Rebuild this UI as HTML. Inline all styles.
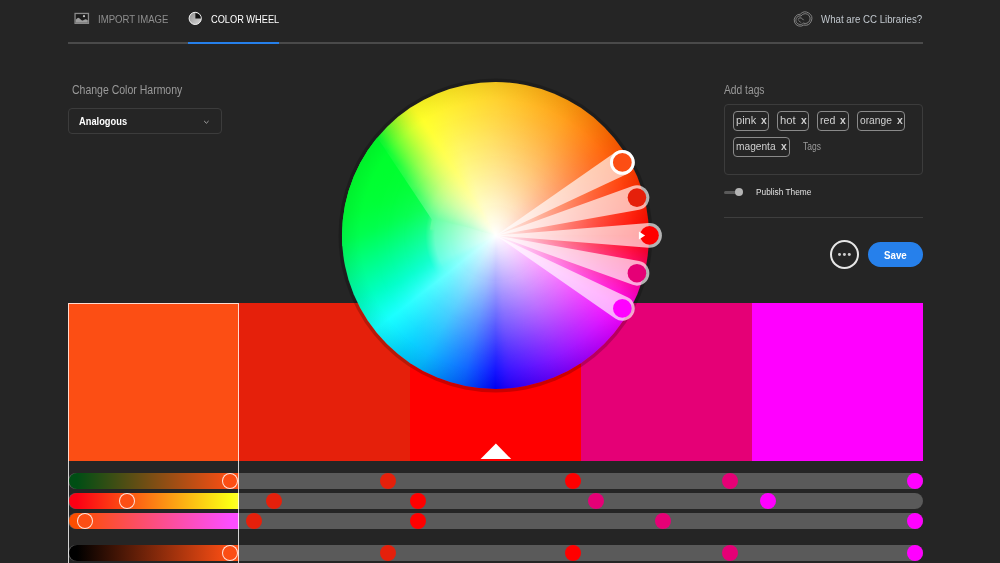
<!DOCTYPE html>
<html lang="en">
<head>
<meta charset="utf-8">
<title>Color Wheel</title>
<style>
html,body{margin:0;padding:0;}
body{width:1000px;height:563px;overflow:hidden;background:#252525;position:relative;
 font-family:"Liberation Sans",sans-serif;color:#fff;}
.abs{position:absolute;}
.t{position:absolute;white-space:nowrap;line-height:1;transform-origin:0 0;}
.line{position:absolute;}
.tag{position:absolute;box-sizing:border-box;height:20px;border:1px solid #8a8a8a;border-radius:4px;}
.tag .t{color:#d0d0d0;font-size:11.5px;top:3.5px;}
.tag .x{font-weight:bold;}
.sw{position:absolute;top:303px;height:158px;width:171px;}
.sl{position:absolute;left:68px;width:855px;height:16px;border-radius:8px;background:#5a5a5a;}
.dot{position:absolute;width:16px;height:16px;border-radius:50%;margin-left:-8px;}
.grad{position:absolute;left:69px;width:170px;height:16px;border-radius:8px 0 0 8px;}
.hd{position:absolute;width:16px;height:16px;border-radius:50%;margin-left:-8px;box-sizing:border-box;border:1px solid rgba(255,255,255,.85);}
.wl{position:absolute;border-radius:50%;}
</style>
</head>
<body>

<!-- header -->
<svg class="abs" style="left:74px;top:12px" width="16" height="13" viewBox="74 12 16 13">
 <rect x="74.4" y="12.8" width="14.7" height="11.2" fill="#8a8a8a"/>
 <rect x="75.7" y="14.1" width="12.1" height="8.7" fill="#1c1c1c"/>
 <path d="M75.7 19.8 L77.3 18.2 Q78.3 17.3 79.3 18.3 L81.6 20.3 Q82.4 20.9 83.3 20.3 L84.8 19.5 Q85.6 19.1 86.4 19.5 L87.8 20.2 V22.8 H75.7 Z" fill="#9e9e9e"/>
 <circle cx="84" cy="16.2" r="1.1" fill="#c4c4c4"/>
</svg>
<div class="t" id="t1" style="left:98.2px;top:13.5px;font-size:11.5px;color:#8e8e8e;transform:scaleX(.833)">IMPORT IMAGE</div>

<svg class="abs" style="left:188px;top:11px" width="15" height="15" viewBox="0 0 15 15">
 <defs><linearGradient id="cwg" x1="0" y1="0" x2="1" y2="1"><stop offset="0" stop-color="#8c8c8c"/><stop offset="1" stop-color="#d8d8d8"/></linearGradient></defs>
 <circle cx="7.2" cy="7.4" r="6.1" fill="url(#cwg)" stroke="#f4f4f4" stroke-width="1"/>
 <path d="M7.4 7.4 V1.9 A5.5 5.5 0 0 1 12.9 7.4 Z" fill="#111"/>
</svg>
<div class="t" id="t2" style="left:211.4px;top:13.5px;font-size:11.5px;color:#fff;transform:scaleX(.802)">COLOR WHEEL</div>

<div class="line" style="left:68px;top:42px;width:855px;height:1.7px;background:#4a4a4a"></div>
<div class="line" style="left:188px;top:41.6px;width:91.3px;height:2px;background:#2680eb"></div>

<svg class="abs" style="left:793px;top:11px" width="20" height="16" viewBox="0 0 20 16">
 <g fill="none" stroke="#8c8c8c" stroke-width="0.9">
 <path d="M7.27 3.2 A6 6 0 1 0 10.75 14.04 A6.6 6.6 0 1 0 7.27 3.2 Z"/>
 <path d="M8.06 4.99 A4.3 4.3 0 1 0 10.34 12.13 A4.9 4.9 0 1 0 8.06 4.99 Z"/>
 <path d="M5.2 8.6 C5.4 6.6 8 6.2 9.4 7.8 L10.6 9.2"/>
 <path d="M5.6 9.4 L7.8 11.6"/>
 </g>
</svg>
<div class="t" id="t3" style="left:821.3px;top:13.6px;font-size:11px;color:#c2c8ce;transform:scaleX(.88)">What are CC Libraries?</div>

<!-- left panel -->
<div class="t" id="t4" style="left:72.2px;top:83.6px;font-size:12.5px;color:#9a9a9a;transform:scaleX(.84)">Change Color Harmony</div>
<div class="abs" style="left:68px;top:108px;width:154px;height:25.5px;box-sizing:border-box;border:1px solid #3c3c3c;border-radius:4px;background:#252525"></div>
<div class="t" id="t5" style="left:78.9px;top:116.9px;font-size:10px;font-weight:bold;color:#fff;transform:scaleX(.93)">Analogous</div>
<svg class="abs" style="left:203px;top:120.3px" width="7" height="5" viewBox="0 0 7 5"><path d="M1.2 1 L3.4 3.2 L5.6 1" fill="none" stroke="#a8a8a8" stroke-width="1"/></svg>

<!-- right panel -->
<div class="t" id="t6" style="left:724.2px;top:83.9px;font-size:12.5px;color:#9a9a9a;transform:scaleX(.82)">Add tags</div>
<div class="abs" style="left:724px;top:104px;width:199px;height:70.5px;box-sizing:border-box;border:1px solid #3c3c3c;border-radius:4px"></div>

<div class="tag" style="left:732.8px;top:110.9px;width:36.2px"><div class="t" style="left:1.8px;transform:scaleX(0.96)">pink</div><div class="t x" style="left:26.8px;transform:scaleX(.9)">x</div></div>
<div class="tag" style="left:777px;top:110.9px;width:32px"><div class="t" style="left:2.1px;transform:scaleX(0.98)">hot</div><div class="t x" style="left:22.9px;transform:scaleX(.9)">x</div></div>
<div class="tag" style="left:817.1px;top:110.9px;width:31.8px"><div class="t" style="left:2.1px;transform:scaleX(0.92)">red</div><div class="t x" style="left:22.4px;transform:scaleX(.9)">x</div></div>
<div class="tag" style="left:857.2px;top:110.9px;width:48.2px"><div class="t" style="left:1.7px;transform:scaleX(0.89)">orange</div><div class="t x" style="left:38.8px;transform:scaleX(.9)">x</div></div>
<div class="tag" style="left:732.8px;top:136.5px;width:57px"><div class="t" style="left:2.1px;transform:scaleX(0.885)">magenta</div><div class="t x" style="left:47.2px;transform:scaleX(.9)">x</div></div>
<div class="t" id="t7" style="left:802.6px;top:141.2px;font-size:11px;color:#9a9a9a;transform:scaleX(.77)">Tags</div>

<div class="abs" style="left:724px;top:190.5px;width:13px;height:3px;border-radius:1.5px;background:#5a5a5a"></div>
<div class="abs" style="left:735.2px;top:188px;width:8px;height:8px;border-radius:50%;background:#b4b4b4"></div>
<div class="t" id="t8" style="left:755.7px;top:187.7px;font-size:9.2px;color:#e2e2e2;transform:scaleX(.905)">Publish Theme</div>
<div class="line" style="left:724px;top:217px;width:199px;height:1px;background:#3e3e3e"></div>

<div class="abs" style="left:829.7px;top:240.1px;width:29px;height:29px;box-sizing:border-box;border:2px solid #e6e6e6;border-radius:50%"></div>
<div class="abs" style="left:838px;top:253.3px;width:2.8px;height:2.8px;border-radius:50%;background:#ccc;box-shadow:4.9px 0 0 #ccc,9.8px 0 0 #ccc"></div>
<div class="abs" style="left:868.4px;top:241.7px;width:54.5px;height:25.7px;border-radius:13px;background:#2680eb"></div>
<div class="t" id="t9" style="left:884.4px;top:249.6px;font-size:10.6px;font-weight:bold;color:#fff;transform:scaleX(.92)">Save</div>

<!-- swatches -->
<div class="sw" style="left:68px;background:#fc4e14"></div>
<div class="sw" style="left:239px;background:#e5200b"></div>
<div class="sw" style="left:410px;background:#ff0000"></div>
<div class="sw" style="left:581px;background:#e50076"></div>
<div class="sw" style="left:752px;background:#ff00ff"></div>
<svg class="abs" style="left:478px;top:441px" width="36" height="20" viewBox="0 0 36 20"><path d="M2.6 18.1 L33.2 18.1 L17.9 2.5 Z" fill="#fff"/></svg>

<!-- sliders -->
<div class="sl" style="top:473px"></div>
<div class="sl" style="top:493px"></div>
<div class="sl" style="top:513px"></div>
<div class="sl" style="top:545px"></div>

<div class="grad" style="top:473px;background:linear-gradient(90deg,#004e14 0,#004e14 8px,#fc4e14 162px,#fc4e14 100%)"></div>
<div class="grad" style="top:493px;background:linear-gradient(90deg,#fc0014 0,#fc0014 8px,#fcff14 162px,#ffff30 100%)"></div>
<div class="grad" style="top:513px;background:linear-gradient(90deg,#fc4e00 0,#fc4e00 8px,#fc4eff 162px,#fc4eff 100%)"></div>
<div class="grad" style="top:545px;background:linear-gradient(90deg,#000 0,#000 8px,#ff4f14 162px,#ff4f14 100%)"></div>

<div class="hd" style="left:230.3px;top:473px;background:#fc4e14"></div>
<div class="hd" style="left:126.7px;top:493px;background:#fc4e14"></div>
<div class="hd" style="left:85.2px;top:513px;background:#fc4e14"></div>
<div class="hd" style="left:230.3px;top:545px;background:#fc4e14"></div>

<div class="dot" style="left:388.25px;top:473px;background:#e5200b"></div>
<div class="dot" style="left:273.75px;top:493px;background:#e5200b"></div>
<div class="dot" style="left:254.25px;top:513px;background:#e5200b"></div>
<div class="dot" style="left:388.25px;top:545px;background:#e5200b"></div>

<div class="dot" style="left:573px;top:473px;background:#ff0000"></div>
<div class="dot" style="left:418px;top:493px;background:#ff0000"></div>
<div class="dot" style="left:418px;top:513px;background:#ff0000"></div>
<div class="dot" style="left:573px;top:545px;background:#ff0000"></div>

<div class="dot" style="left:730.25px;top:473px;background:#e50076"></div>
<div class="dot" style="left:596.25px;top:493px;background:#e50076"></div>
<div class="dot" style="left:663px;top:513px;background:#e50076"></div>
<div class="dot" style="left:730.25px;top:545px;background:#e50076"></div>

<div class="dot" style="left:915px;top:473px;background:#ff00ff"></div>
<div class="dot" style="left:768.25px;top:493px;background:#ff00ff"></div>
<div class="dot" style="left:915px;top:513px;background:#ff00ff"></div>
<div class="dot" style="left:915px;top:545px;background:#ff00ff"></div>

<!-- selected column border -->
<div class="abs" style="left:68px;top:303px;width:171px;height:270px;box-sizing:border-box;border:1px solid rgba(255,255,255,.8)"></div>

<!-- wheel -->
<div class="abs" style="left:342.30px;top:81.80px;width:307.20px;height:307.20px;border-radius:50%;box-shadow:0 0 0 3.5px rgba(0,0,0,.2)"></div>
<div class="wl" style="left:342.30px;top:81.80px;width:307.20px;height:307.20px;background:conic-gradient(from 90deg,#ff0000 0deg,#ff0055 10deg,#ff00aa 20deg,#ff00ff 30deg,#d800ff 40deg,#b000ff 50deg,#8900ff 60deg,#6100ff 70deg,#3a00ff 80deg,#2a00ff 84deg,#1f00ff 86deg,#0100ff 90deg,#004aff 100deg,#0059ff 102deg,#008dff 112deg,#00b7ff 120deg,#00d1ff 128deg,#0ff3ff 138deg,#14ffff 142deg,#05ffcb 152deg,#00ffb6 156deg,#00ff85 166deg,#00ff56 176deg,#00ff4c 178deg,#00ff37 188deg,#00ff30 198deg,#00ff2d 206deg,#08ff31 208deg,#08ff31 218deg,#08ff31 220deg,#51ff2d 224deg,#73ff2b 226deg,#b0ff28 230deg,#caff27 232deg,#e1ff25 234deg,#f4ff24 236deg,#fbff24 237deg,#ffff24 238deg,#fff021 248deg,#ffe121 258deg,#ffd221 268deg,#ffc21c 278deg,#ffb015 288deg,#ff9e0e 298deg,#ff8508 308deg,#ff6901 318deg,#ff4f00 328deg,#ff3700 338deg,#ff1e00 348deg,#ff0500 358deg,#ff0000 360deg);"></div>
<div class="wl" style="left:342.30px;top:81.80px;width:307.20px;height:307.20px;background:conic-gradient(from 90deg,#ff0d0d 0deg,#ff0e5f 10deg,#ff10af 20deg,#ff12ff 30deg,#da13ff 40deg,#b613ff 50deg,#9214ff 60deg,#6d13ff 70deg,#4812ff 80deg,#3912ff 84deg,#2e12ff 86deg,#1211ff 90deg,#0f55ff 100deg,#0f63ff 102deg,#0d93ff 112deg,#0bbaff 120deg,#08d2ff 128deg,#13f3ff 138deg,#17ffff 142deg,#05ffce 152deg,#00ffba 156deg,#00ff8c 166deg,#00ff5f 176deg,#00ff4e 180deg,#00ff3a 190deg,#00ff32 200deg,#00ff2f 204deg,#0aff35 206deg,#0aff35 216deg,#0aff35 218deg,#4dff33 222deg,#6cff32 224deg,#a3ff30 228deg,#bcff2f 230deg,#d2ff2d 232deg,#e5ff2c 234deg,#f5ff2a 236deg,#fbff2a 237deg,#ffff29 238deg,#fff12e 248deg,#ffe32e 258deg,#ffd52e 268deg,#ffd22e 270deg,#ffc227 280deg,#ffb120 290deg,#ff9f19 300deg,#ff8613 310deg,#ff6b0d 320deg,#ff530d 330deg,#ff3c0d 340deg,#ff250e 350deg,#ff0e0e 360deg);-webkit-mask-image:radial-gradient(circle closest-side,#000 90.00%,transparent 100%);mask-image:radial-gradient(circle closest-side,#000 90.00%,transparent 100%);"></div>
<div class="wl" style="left:357.66px;top:97.16px;width:276.48px;height:276.48px;background:conic-gradient(from 90deg,#ff1f1f 0deg,#ff226c 10deg,#ff25b6 20deg,#ff28ff 30deg,#de29ff 40deg,#bd2aff 50deg,#9d2bff 60deg,#7b2aff 70deg,#5929ff 80deg,#4c28ff 84deg,#4228ff 86deg,#2726ff 90deg,#2463ff 100deg,#2370ff 102deg,#209cff 112deg,#1cbfff 120deg,#17dbff 130deg,#1ef9ff 140deg,#1fffff 142deg,#13ffee 146deg,#0affdb 150deg,#03ffc8 154deg,#01ffbf 156deg,#00ff93 166deg,#00ff69 176deg,#00ff51 182deg,#00ff4b 184deg,#00ff3a 194deg,#00ff37 196deg,#00ff34 202deg,#12ff3c 204deg,#12ff3c 214deg,#19ff3c 216deg,#53ff3c 220deg,#87ff3c 224deg,#b4ff3a 228deg,#c8ff39 230deg,#daff38 232deg,#eaff37 234deg,#f7ff36 236deg,#fcff35 237deg,#ffff34 238deg,#fff23f 248deg,#ffe53f 258deg,#ffd83f 268deg,#ffd63f 270deg,#ffc738 280deg,#ffb731 290deg,#ffa72b 300deg,#ff8f25 310deg,#ff761f 320deg,#ff611f 330deg,#ff4c20 340deg,#ff3721 350deg,#ff2222 360deg);-webkit-mask-image:radial-gradient(circle closest-side,#000 88.89%,transparent 100%);mask-image:radial-gradient(circle closest-side,#000 88.89%,transparent 100%);"></div>
<div class="wl" style="left:373.02px;top:112.52px;width:245.76px;height:245.76px;background:conic-gradient(from 90deg,#ff3535 0deg,#ff397b 10deg,#ff3cbe 20deg,#ff40ff 30deg,#e241ff 40deg,#c542ff 50deg,#a844ff 60deg,#8a42ff 70deg,#6c41ff 80deg,#6040ff 84deg,#573fff 86deg,#3f3eff 90deg,#3a74ff 100deg,#3a7fff 102deg,#36a5ff 112deg,#36adff 114deg,#31c5ff 120deg,#2adeff 130deg,#2bfaff 140deg,#2cffff 142deg,#23fff8 144deg,#06ffcd 154deg,#02ffa4 164deg,#02ff7d 174deg,#02ff58 184deg,#02ff51 186deg,#02ff4c 188deg,#02ff3d 198deg,#1eff4a 200deg,#1eff4a 210deg,#1eff4a 212deg,#34ff4a 214deg,#8eff4b 222deg,#d4ff48 230deg,#efff46 234deg,#f9ff45 236deg,#fdff44 237deg,#ffff44 238deg,#fffd47 240deg,#fffa4b 242deg,#fff352 248deg,#ffe852 258deg,#ffdc52 268deg,#ffcf4d 278deg,#ffc147 288deg,#ffb241 298deg,#ff9e3b 308deg,#ff8836 318deg,#ff7435 328deg,#ff6136 338deg,#ff4f37 348deg,#ff3c38 358deg,#ff3939 360deg);-webkit-mask-image:radial-gradient(circle closest-side,#000 87.50%,transparent 100%);mask-image:radial-gradient(circle closest-side,#000 87.50%,transparent 100%);"></div>
<div class="wl" style="left:388.38px;top:127.88px;width:215.04px;height:215.04px;background:conic-gradient(from 90deg,#ff4d4d 0deg,#ff518b 10deg,#ff55c6 20deg,#ff59ff 30deg,#e65aff 40deg,#cd5cff 50deg,#b45dff 60deg,#9a5bff 70deg,#7f5aff 80deg,#7559ff 84deg,#6d58ff 86deg,#5757ff 90deg,#5385ff 100deg,#528fff 102deg,#4fb0ff 112deg,#48cbff 120deg,#3fe1ff 130deg,#3dfaff 140deg,#3effff 142deg,#33fff9 144deg,#1affe3 150deg,#0effd4 154deg,#0affcc 156deg,#07ffa7 166deg,#07ff85 176deg,#07ff64 186deg,#07ff52 192deg,#07ff4f 194deg,#2fff5d 196deg,#2fff5d 206deg,#32ff5d 208deg,#59ff5e 212deg,#acff5d 222deg,#d4ff5b 228deg,#eaff5a 232deg,#f3ff58 234deg,#faff57 236deg,#ffff56 238deg,#fff568 248deg,#ffeb68 258deg,#ffe168 268deg,#ffd563 278deg,#ffc95d 288deg,#ffbb58 298deg,#ffb956 300deg,#ffa652 310deg,#ff934d 320deg,#ff814d 330deg,#ff714f 340deg,#ff6150 350deg,#ff5151 360deg);-webkit-mask-image:radial-gradient(circle closest-side,#000 85.71%,transparent 100%);mask-image:radial-gradient(circle closest-side,#000 85.71%,transparent 100%);"></div>
<div class="wl" style="left:403.74px;top:143.24px;width:184.32px;height:184.32px;background:conic-gradient(from 90deg,#ff6262 0deg,#ff6699 10deg,#ff6acd 20deg,#ff6eff 30deg,#e96fff 40deg,#d370ff 50deg,#be72ff 60deg,#a770ff 70deg,#8f6eff 80deg,#866eff 84deg,#7f6dff 86deg,#6c6cff 90deg,#6894ff 100deg,#679cff 102deg,#63baff 112deg,#63c0ff 114deg,#5dd1ff 120deg,#53e4ff 130deg,#4ffaff 140deg,#4fffff 142deg,#43fffa 144deg,#2fffee 148deg,#1fffe1 152deg,#18ffd9 154deg,#13ffd2 156deg,#0effc5 160deg,#0effa5 170deg,#0eff87 180deg,#0eff70 188deg,#41ff76 190deg,#41ff76 200deg,#41ff76 202deg,#4bff76 204deg,#93ff73 214deg,#ccff6f 224deg,#e8ff6c 230deg,#fcff68 236deg,#ffff67 238deg,#fffd6c 240deg,#fffb71 242deg,#fff67a 248deg,#ffed7a 258deg,#ffe47a 268deg,#ffda76 278deg,#ffcf70 288deg,#ffc36b 298deg,#ffb467 308deg,#ffa363 318deg,#ff9362 328deg,#ff8563 338deg,#ff7664 348deg,#ff6966 358deg,#ff6666 360deg);-webkit-mask-image:radial-gradient(circle closest-side,#000 86.67%,transparent 100%);mask-image:radial-gradient(circle closest-side,#000 86.67%,transparent 100%);"></div>
<div class="wl" style="left:416.03px;top:155.53px;width:159.74px;height:159.74px;background:conic-gradient(from 90deg,#ff7272 0deg,#ff76a4 10deg,#ff7ad3 20deg,#ff7eff 30deg,#eb7fff 40deg,#d880ff 50deg,#c581ff 60deg,#b080ff 70deg,#9c7eff 80deg,#937eff 84deg,#8d7dff 86deg,#7c7cff 90deg,#789fff 100deg,#77a7ff 102deg,#74c1ff 112deg,#6dd6ff 120deg,#63e7ff 130deg,#5efbff 140deg,#5dffff 142deg,#2bffe5 152deg,#23ffde 154deg,#1dffd8 156deg,#16ffcb 160deg,#16ffaf 170deg,#16ff95 180deg,#16ff8b 184deg,#50ff90 186deg,#50ff90 196deg,#54ff8f 198deg,#8fff89 208deg,#a4ff87 212deg,#d1ff80 222deg,#f3ff79 232deg,#fcff77 236deg,#ffff76 238deg,#fffd7a 240deg,#fffc7f 242deg,#fff788 248deg,#ffef88 258deg,#ffe788 268deg,#ffde84 278deg,#ffd47f 288deg,#ffca7a 298deg,#ffbc77 308deg,#ffac73 318deg,#ff9e72 328deg,#ff9173 338deg,#ff8575 348deg,#ff7876 358deg,#ff7676 360deg);-webkit-mask-image:radial-gradient(circle closest-side,#000 88.46%,transparent 100%);mask-image:radial-gradient(circle closest-side,#000 88.46%,transparent 100%);"></div>
<div class="wl" style="left:425.24px;top:164.74px;width:141.31px;height:141.31px;background:conic-gradient(from 90deg,#ff8383 0deg,#ff87af 10deg,#ff8ad8 20deg,#ff8eff 30deg,#ee8fff 40deg,#dd90ff 50deg,#cc91ff 60deg,#ba90ff 70deg,#a88eff 80deg,#a18eff 84deg,#8c8cff 90deg,#88abff 100deg,#85c4ff 110deg,#84cdff 114deg,#7edbff 120deg,#77e6ff 128deg,#6cf7ff 138deg,#6affff 142deg,#64fffb 144deg,#5ffff4 148deg,#5ffff0 150deg,#66ffe6 156deg,#66ffd4 166deg,#66ffc3 176deg,#66ffb3 186deg,#66ffa6 194deg,#6bffa2 196deg,#9cff9b 206deg,#c5ff94 216deg,#e6ff8c 226deg,#faff87 234deg,#fdff85 236deg,#ffff85 238deg,#fffd89 240deg,#fffc8e 242deg,#fff896 248deg,#fff196 258deg,#ffea96 268deg,#ffe293 278deg,#ffd98f 288deg,#ffd08a 298deg,#ffc487 308deg,#ffb684 318deg,#ffaa83 328deg,#ff9e84 338deg,#ff9385 348deg,#ff8986 358deg,#ff8787 360deg);-webkit-mask-image:radial-gradient(circle closest-side,#000 86.96%,transparent 100%);mask-image:radial-gradient(circle closest-side,#000 86.96%,transparent 100%);"></div>
<div class="wl" style="left:434.46px;top:173.96px;width:122.88px;height:122.88px;background:conic-gradient(from 90deg,#ffa0a0 0deg,#ffa3c2 10deg,#ffa6e1 20deg,#ffa9ff 30deg,#f2aaff 40deg,#e5abff 50deg,#d9acff 60deg,#cbabff 70deg,#bdaaff 80deg,#a8a8ff 90deg,#a5bfff 100deg,#a4c4ff 102deg,#a1d5ff 112deg,#9ce3ff 120deg,#93eeff 130deg,#8cfcff 140deg,#8cffff 142deg,#87fffc 144deg,#84fff3 150deg,#8cffec 156deg,#8cffdf 166deg,#8cffd2 176deg,#8cffc6 186deg,#8cffbd 194deg,#89ffb5 196deg,#b0ffb0 206deg,#d1ffab 216deg,#ebffa6 226deg,#f4ffa3 230deg,#fbffa1 234deg,#ffffa0 238deg,#fffea4 240deg,#fffda8 242deg,#fffaaf 248deg,#fff4af 258deg,#ffefaf 268deg,#ffe9ad 278deg,#ffe2a9 288deg,#ffdba6 298deg,#ffd2a3 308deg,#ffc7a1 318deg,#ffbea0 328deg,#ffb5a1 338deg,#ffada2 348deg,#ffa5a3 358deg,#ffa3a3 360deg);-webkit-mask-image:radial-gradient(circle closest-side,#000 75.00%,transparent 100%);mask-image:radial-gradient(circle closest-side,#000 75.00%,transparent 100%);"></div>
<div class="wl" style="left:449.82px;top:189.32px;width:92.16px;height:92.16px;background:conic-gradient(from 90deg,#ffbfbf 0deg,#ffc1d6 10deg,#ffc3eb 20deg,#ffc5ff 30deg,#f6c6ff 40deg,#eec7ff 50deg,#e5c7ff 60deg,#dcc7ff 70deg,#d3c6ff 80deg,#c4c4ff 90deg,#c2d4ff 100deg,#c0e0ff 110deg,#bcecff 120deg,#b5f4ff 130deg,#b1fdff 140deg,#b0ffff 142deg,#aafff9 148deg,#b2fff2 156deg,#b2ffea 166deg,#b2ffe1 176deg,#b2ffd9 186deg,#b2ffd3 194deg,#acffcb 196deg,#c8ffc8 206deg,#deffc5 216deg,#e3ffc4 218deg,#f4ffc0 228deg,#ffffbd 238deg,#fffec0 240deg,#fffdc4 242deg,#fffbc9 248deg,#fff8c9 258deg,#fff4c9 268deg,#fff0c7 278deg,#ffebc5 288deg,#ffe7c2 298deg,#ffe0c1 308deg,#ffd9bf 318deg,#ffd3bf 328deg,#ffcdbf 338deg,#ffc7c0 348deg,#ffc2c1 358deg,#ffc1c1 360deg);-webkit-mask-image:radial-gradient(circle closest-side,#000 66.67%,transparent 100%);mask-image:radial-gradient(circle closest-side,#000 66.67%,transparent 100%);"></div>
<div class="wl" style="left:465.18px;top:204.68px;width:61.44px;height:61.44px;background:conic-gradient(from 90deg,#ffdede 0deg,#ffe0ea 10deg,#ffe1f5 20deg,#ffe2ff 30deg,#fbe2ff 40deg,#f6e3ff 50deg,#f2e3ff 60deg,#ede3ff 70deg,#e9e2ff 80deg,#e1e1ff 90deg,#e0e9ff 100deg,#dfefff 110deg,#ddf5ff 120deg,#d9f9ff 130deg,#d7feff 140deg,#d7ffff 142deg,#d5fffa 152deg,#d9fff9 156deg,#d9fff4 166deg,#d9fff0 176deg,#d9ffec 186deg,#d9ffe9 194deg,#d3ffe3 196deg,#e2ffe2 206deg,#eeffe1 216deg,#f8ffdf 226deg,#feffdd 236deg,#fffde3 246deg,#fffce4 256deg,#fffae4 266deg,#fff8e3 276deg,#fff6e2 286deg,#fff3e0 296deg,#fff0e0 306deg,#ffeddf 316deg,#ffe9de 326deg,#ffe6df 336deg,#ffe3df 346deg,#ffe1df 356deg,#ffe0e0 360deg);-webkit-mask-image:radial-gradient(circle closest-side,#000 50.00%,transparent 100%);mask-image:radial-gradient(circle closest-side,#000 50.00%,transparent 100%);"></div>
<div class="wl" style="left:480.54px;top:220.04px;width:30.72px;height:30.72px;background:#fff;-webkit-mask-image:radial-gradient(circle closest-side,#000 0%,transparent 100%);mask-image:radial-gradient(circle closest-side,#000 0%,transparent 100%);"></div>
<div class="abs" style="left:342.30px;top:81.80px;width:307.20px;height:307.20px;clip-path:polygon(32.41px 51.91px,89.51px 137.62px,89.00px 139.87px,88.56px 142.13px,88.19px 144.41px,87.91px 146.70px,87.71px 148.99px,87.59px 151.29px,87.55px 153.60px,87.59px 155.91px,87.71px 158.21px,-4.22px 164.64px,-9.22px 153.60px,-8.32px 136.58px,-5.66px 119.75px,-1.25px 103.29px,4.86px 87.38px,12.60px 72.19px,21.88px 57.90px);-webkit-clip-path:polygon(32.41px 51.91px,89.51px 137.62px,89.00px 139.87px,88.56px 142.13px,88.19px 144.41px,87.91px 146.70px,87.71px 148.99px,87.59px 151.29px,87.55px 153.60px,87.59px 155.91px,87.71px 158.21px,-4.22px 164.64px,-9.22px 153.60px,-8.32px 136.58px,-5.66px 119.75px,-1.25px 103.29px,4.86px 87.38px,12.60px 72.19px,21.88px 57.90px);isolation:isolate;opacity:.9999">
<div class="wl" style="left:0.00px;top:0.00px;width:307.20px;height:307.20px;background:conic-gradient(from 90deg,#ff0000 0deg,#00ffa2 160deg,#00ff72 170deg,#00ff4c 178deg,#00ff37 188deg,#00ff30 198deg,#00ff2d 208deg,#00ff2b 218deg,#00ff2a 220deg,#00ff2b 230deg,#00ff2b 240deg,#00ff2b 360deg);"></div>
<div class="wl" style="left:0.00px;top:0.00px;width:307.20px;height:307.20px;background:conic-gradient(from 90deg,#ff0d0d 0deg,#00ffa7 160deg,#00ff7a 170deg,#00ff4e 180deg,#00ff3a 190deg,#00ff32 200deg,#00ff2e 210deg,#00ff2c 220deg,#00ff2c 230deg,#00ff2c 240deg,#00ff2c 360deg);-webkit-mask-image:radial-gradient(circle closest-side,#000 90.00%,transparent 100%);mask-image:radial-gradient(circle closest-side,#000 90.00%,transparent 100%);"></div>
<div class="wl" style="left:15.36px;top:15.36px;width:276.48px;height:276.48px;background:conic-gradient(from 90deg,#ff1f1f 0deg,#00ffad 160deg,#00ff82 170deg,#00ff59 180deg,#00ff51 182deg,#00ff4b 184deg,#00ff3a 194deg,#00ff37 196deg,#00ff31 206deg,#00ff2e 216deg,#00ff2e 226deg,#00ff2e 236deg,#00ff2e 360deg);-webkit-mask-image:radial-gradient(circle closest-side,#000 88.89%,transparent 100%);mask-image:radial-gradient(circle closest-side,#000 88.89%,transparent 100%);"></div>
<div class="wl" style="left:30.72px;top:30.72px;width:245.76px;height:245.76px;background:conic-gradient(from 90deg,#ff3535 0deg,#02ffb4 160deg,#02ff8d 170deg,#02ff66 180deg,#02ff51 186deg,#02ff4c 188deg,#02ff3d 198deg,#02ff35 208deg,#02ff33 218deg,#02ff33 228deg,#02ff33 238deg,#02ff33 360deg);-webkit-mask-image:radial-gradient(circle closest-side,#000 87.50%,transparent 100%);mask-image:radial-gradient(circle closest-side,#000 87.50%,transparent 100%);"></div>
<div class="wl" style="left:46.08px;top:46.08px;width:215.04px;height:215.04px;background:conic-gradient(from 90deg,#ff4d4d 0deg,#07ffbd 160deg,#07ff99 170deg,#07ff77 180deg,#07ff58 190deg,#07ff52 192deg,#07ff45 202deg,#07ff3e 208deg,#07ff3e 218deg,#07ff3e 228deg,#07ff3e 238deg,#07ff3e 360deg);-webkit-mask-image:radial-gradient(circle closest-side,#000 85.71%,transparent 100%);mask-image:radial-gradient(circle closest-side,#000 85.71%,transparent 100%);"></div>
<div class="wl" style="left:61.44px;top:61.44px;width:184.32px;height:184.32px;background:conic-gradient(from 90deg,#ff6262 0deg,#0effc5 160deg,#0effa5 170deg,#0eff87 180deg,#0eff6b 190deg,#0eff57 198deg,#0eff52 202deg,#0eff52 212deg,#0eff52 222deg,#0eff52 232deg,#0eff52 360deg);-webkit-mask-image:radial-gradient(circle closest-side,#000 86.67%,transparent 100%);mask-image:radial-gradient(circle closest-side,#000 86.67%,transparent 100%);"></div>
<div class="wl" style="left:73.73px;top:73.73px;width:159.74px;height:159.74px;background:conic-gradient(from 90deg,#ff7272 0deg,#16ffcb 160deg,#16ffaf 170deg,#16ff95 180deg,#16ff7b 190deg,#16ff6b 198deg,#16ff6b 208deg,#16ff6b 218deg,#16ff6b 228deg,#16ff6b 238deg,#16ff6b 360deg);-webkit-mask-image:radial-gradient(circle closest-side,#000 88.46%,transparent 100%);mask-image:radial-gradient(circle closest-side,#000 88.46%,transparent 100%);"></div>
<div class="wl" style="left:82.94px;top:82.94px;width:141.31px;height:141.31px;background:conic-gradient(from 90deg,#ff8383 0deg,#66ffdf 160deg,#66ffcd 170deg,#66ffbd 180deg,#66ffad 190deg,#66ffa6 194deg,#66ffa6 204deg,#66ffa6 214deg,#66ffa6 224deg,#66ffa6 234deg,#66ffa6 360deg);-webkit-mask-image:radial-gradient(circle closest-side,#000 86.96%,transparent 100%);mask-image:radial-gradient(circle closest-side,#000 86.96%,transparent 100%);"></div>
</div>
<div class="wl" style="left:342.30px;top:81.80px;width:307.20px;height:307.20px;background:radial-gradient(circle closest-side,rgba(0,0,0,0) 0,rgba(0,0,0,0) 88%,rgba(0,0,0,.06) 100%)"></div>

<svg class="abs" style="left:0;top:0" width="1000" height="563" viewBox="0 0 1000 563" id="spokes">
<path d="M495.9 235.4 L615.25 152.23 A12.4 12.4 0 1 1 627.61 173.63 Z" fill="rgba(255,255,255,.66)"/>
<path d="M495.9 235.4 L632.71 185.95 A12.4 12.4 0 1 1 639.11 209.82 Z" fill="rgba(255,255,255,.66)"/>
<path d="M495.9 235.4 L648.50 223.04 A12.4 12.4 0 1 1 648.50 247.76 Z" fill="rgba(255,255,255,.66)"/>
<path d="M495.9 235.4 L639.11 260.98 A12.4 12.4 0 1 1 632.71 284.85 Z" fill="rgba(255,255,255,.66)"/>
<path d="M495.9 235.4 L627.61 297.17 A12.4 12.4 0 1 1 615.25 318.57 Z" fill="rgba(255,255,255,.66)"/>
<circle cx="622.34" cy="162.40" r="10.9" fill="#fc4e14" stroke="#fff" stroke-width="3"/>
<circle cx="636.93" cy="197.61" r="9.3" fill="#e5200b"/>
<circle cx="649.50" cy="235.40" r="9.3" fill="#ff0000"/>
<circle cx="636.93" cy="273.19" r="9.3" fill="#e50076"/>
<circle cx="622.34" cy="308.40" r="9.3" fill="#ff00ff"/>
<path d="M638.9 231.6 L645.1 235.5 L638.9 239.6 Z" fill="#fff"/>
</svg>

</body>
</html>
